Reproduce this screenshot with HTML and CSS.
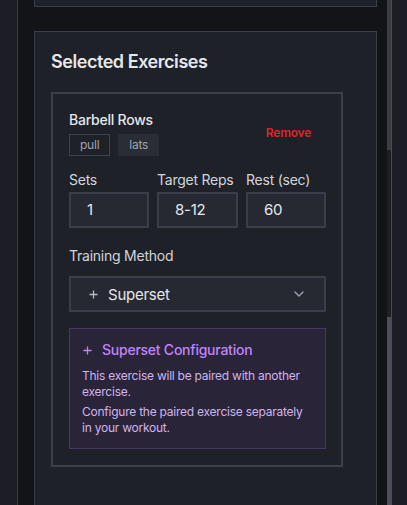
FILE: index.html
```html
<!DOCTYPE html>
<html lang="en">
<head>
<meta charset="utf-8">
<title>Selected Exercises</title>
<link rel="stylesheet" href="styles.css">
</head>
<body>
<div class="frame">
  <div class="content">
    <div class="card card-prev"></div>
    <section class="card">
      <h2 class="card-title">Selected Exercises</h2>
      <div class="exercise">
        <div class="ex-head">
          <div class="ex-info">
            <div class="ex-name">Barbell Rows</div>
            <div class="tags">
              <span class="tag tag-outline">pull</span>
              <span class="tag tag-fill">lats</span>
            </div>
          </div>
          <button class="remove">Remove</button>
        </div>
        <div class="fields">
          <label class="field">
            <span class="field-label">Sets</span>
            <span class="input">1</span>
          </label>
          <label class="field">
            <span class="field-label">Target Reps</span>
            <span class="input">8-12</span>
          </label>
          <label class="field">
            <span class="field-label">Rest (sec)</span>
            <span class="input">60</span>
          </label>
        </div>
        <div class="method">
          <div class="field-label">Training Method</div>
          <div class="select">
            <svg class="plus" width="9" height="9" viewBox="0 0 9 9"><path d="M4.5 0.5v8M0.5 4.5h8" stroke="currentColor" stroke-width="1.3" fill="none"/></svg>
            <span class="select-text">Superset</span>
            <svg class="chev" width="10" height="6" viewBox="0 0 10 6"><path d="M1 1l4 4 4-4" stroke="currentColor" stroke-width="1.3" fill="none" stroke-linecap="round" stroke-linejoin="round"/></svg>
          </div>
        </div>
        <div class="config">
          <div class="config-title">
            <svg class="plus" width="9" height="9" viewBox="0 0 9 9"><path d="M4.5 0.5v8M0.5 4.5h8" stroke="currentColor" stroke-width="1.3" fill="none"/></svg>
            <span>Superset Configuration</span>
          </div>
          <p class="config-text">This exercise will be paired with another exercise.</p>
          <p class="config-text">Configure the paired exercise separately in your workout.</p>
        </div>
      </div>
    </section>
  </div>
  <div class="scrollbar">
    <div class="thumb-top"></div>
    <div class="track"></div>
    <div class="thumb"></div>
  </div>
</div>
</body>
</html>
```
FILE: styles.css
```css
* { box-sizing: border-box; }
html, body { margin: 0; padding: 0; }
body {
  background: #1c1d25;
  font-family: Inter, "Noto Sans", sans-serif;
  letter-spacing: -0.015em;
  color: #e5e7eb;
  height: 505px;
  overflow: hidden;
}
.frame {
  margin-left: 17px;
  width: 375px;
  height: 505px;
  display: flex;
  background: #131418;
  border-left: 1px solid #3a3d46;
  border-right: 1px solid #474b55;
}
.content {
  flex: 1;
  padding: 0 10px 0 16px;
}
.scrollbar {
  width: 4px;
  display: flex;
  flex-direction: column;
}
.thumb-top { height: 150px; background: #3a3d45; }
.track { height: 167px; background: #1e1f24; }
.thumb { flex: 1; background: #4a4f5a; }

.card {
  background: #1f2129;
  border: 1px solid #3a3e48;
  padding: 16px 16px 60px;
}
.card-prev {
  height: 7px;
  padding: 0;
  border-top: none;
  margin-bottom: 24px;
}
.card-title {
  margin: 0;
  font-size: 18px;
  line-height: 28px;
  font-weight: 600;
  letter-spacing: -0.025em;
  color: #e5e7eb;
}
.exercise {
  margin-top: 16px;
  width: 292px;
  border: 2px solid #3b4049;
  padding: 16px 15px 16px 16px;
}
.ex-head {
  display: flex;
  justify-content: space-between;
  align-items: center;
}
.ex-name {
  font-size: 14px;
  line-height: 20px;
  font-weight: 500;
  color: #e5e7eb;
}
.tags {
  display: flex;
  gap: 8px;
  margin-top: 4px;
}
.tag {
  font-size: 12px;
  line-height: 20px;
  padding: 0 10px;
  color: #9ca3af;
  border: 1px solid #3d424c;
}
.tag-fill {
  background: #2a2d35;
  border-color: #2a2d35;
}
.remove {
  background: none;
  border: none;
  font-family: inherit;
  letter-spacing: inherit;
  font-size: 12px;
  font-weight: 600;
  color: #dc2626;
  padding: 4px 15px 4px 14px;
  margin-top: -2px;
}
.fields {
  margin-top: 14px;
  display: grid;
  grid-template-columns: 80px 81px 80px;
  gap: 8px;
}
.field { display: flex; flex-direction: column; }
.field-label {
  font-size: 14px;
  line-height: 20px;
  color: #d1d5db;
  margin-bottom: 2px;
}
.input {
  height: 36px;
  background: #262931;
  border: 2px solid #393e48;
  padding: 0 16px;
  font-size: 15px;
  line-height: 32px;
  color: #e5e7eb;
}
.method { margin-top: 18px; }
.method .field-label { margin-bottom: 10px; }
.select {
  height: 36px;
  background: #262931;
  border: 2px solid #393e48;
  display: flex;
  align-items: center;
  padding: 0 20px 0 18px;
}
.select .plus { color: #b9bdc6; margin-right: 10px; }
.select-text {
  flex: 1;
  font-size: 15px;
  color: #e5e7eb;
}
.chev { color: #a1a6b0; }
.config {
  margin-top: 16px;
  background: #2a2439;
  border: 1px solid #4b3567;
  padding: 11px 18px 12px 12px;
}
.config-title {
  display: flex;
  align-items: center;
  gap: 10px;
  font-size: 14px;
  line-height: 20px;
  font-weight: 500;
  color: #c084fc;
}
.config-title .plus { margin-left: 1px; }
.config-text {
  margin: 8px 0 0;
  font-size: 12px;
  line-height: 16px;
  color: #cfb4ee;
}
.config-text + .config-text { margin-top: 4px; }
```
